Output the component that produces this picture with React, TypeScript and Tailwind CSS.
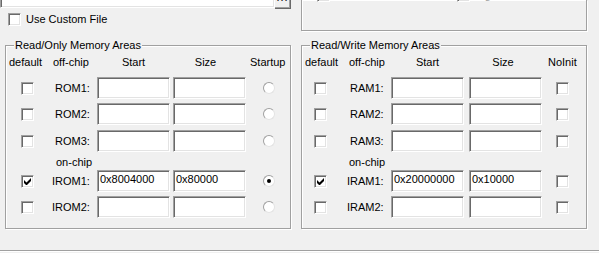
import React from 'react';

const sunken =
  'border border-t-[#a0a0a0] border-l-[#a0a0a0] border-r-white border-b-white shadow-[inset_1px_1px_0_#696969,inset_-1px_-1px_0_#e3e3e3] bg-white';

const CheckBox = ({ checked = false, className = '' }: { checked?: boolean; className?: string }) => (
  <div className={`w-[13px] h-[13px] shrink-0 flex items-center justify-center ${sunken} ${className}`}>
    {checked && (
      <svg width="7" height="7" viewBox="0 0 7 7">
        <path d="M0 2v3l2 2h1l4-4V0L2.5 4.5z" fill="#000" />
      </svg>
    )}
  </div>
);

const Radio = ({ checked = false, className = '' }: { checked?: boolean; className?: string }) => (
  <div
    className={`w-[12px] h-[12px] shrink-0 rounded-full bg-white border border-t-[#a0a0a0] border-l-[#a0a0a0] border-r-[#e3e3e3] border-b-[#e3e3e3] flex items-center justify-center ${className}`}
  >
    {checked && <div className="w-[4px] h-[4px] rounded-full bg-black" />}
  </div>
);

const Edit = ({ value = '', className = '' }: { value?: string; className?: string }) => (
  <div className={`w-[73px] h-[22px] shrink-0 px-[2px] pt-[2px] leading-[13px] text-black ${sunken} ${className}`}>
    {value}
  </div>
);

type RowData = { on: boolean; label: string; start: string; size: string; last: boolean; indent: 'rom' | 'irom' };

const romRows: RowData[] = [
  { on: false, label: 'ROM1:', start: '', size: '', last: false, indent: 'rom' },
  { on: false, label: 'ROM2:', start: '', size: '', last: false, indent: 'rom' },
  { on: false, label: 'ROM3:', start: '', size: '', last: false, indent: 'rom' },
  { on: true, label: 'IROM1:', start: '0x8004000', size: '0x80000', last: true, indent: 'irom' },
  { on: false, label: 'IROM2:', start: '', size: '', last: false, indent: 'irom' },
];

const ramRows: RowData[] = [
  { on: false, label: 'RAM1:', start: '', size: '', last: false, indent: 'rom' },
  { on: false, label: 'RAM2:', start: '', size: '', last: false, indent: 'rom' },
  { on: false, label: 'RAM3:', start: '', size: '', last: false, indent: 'rom' },
  { on: true, label: 'IRAM1:', start: '0x20000000', size: '0x10000', last: false, indent: 'irom' },
  { on: false, label: 'IRAM2:', start: '', size: '', last: false, indent: 'irom' },
];

const rowGap = ['mt-[8px]', 'mt-[4px]', 'mt-[5px]', 'mt-[1px]', 'mt-[4px]'];

const RomRow = ({ r, i }: { r: RowData; i: number }) => (
  <div className={`flex items-center h-[22px] ${rowGap[i]}`}>
    <CheckBox checked={r.on} className="ml-[15px]" />
    <div className={`w-[63px] ${r.indent === 'rom' ? 'pl-[21px]' : 'pl-[18px]'}`}>{r.label}</div>
    <Edit value={r.start} />
    <Edit value={r.size} className="ml-[3px]" />
    <Radio checked={r.last} className="ml-[17px]" />
  </div>
);

const RamRow = ({ r, i }: { r: RowData; i: number }) => (
  <div className={`flex items-center h-[22px] ${rowGap[i]}`}>
    <CheckBox checked={r.on} className="ml-[12px]" />
    <div className={`w-[64px] ${r.indent === 'rom' ? 'pl-[23px]' : 'pl-[20px]'}`}>{r.label}</div>
    <Edit value={r.start} />
    <Edit value={r.size} className="ml-[5px]" />
    <CheckBox className="ml-[14px]" />
  </div>
);

const groupBox = 'border border-[#a0a0a0] shadow-[inset_1px_1px_0_#fff,1px_1px_0_#fff]';

export default function App() {
  return (
    <div
      className="w-[599px] h-[253px] bg-[#f0f0f0] overflow-hidden flex flex-col text-[11px] leading-[13px] text-black"
      style={{ fontFamily: '"Liberation Sans", Arial, sans-serif' }}
    >
      {/* top strip: cut-off file field and code generation box */}
      <div className="flex h-[45px] shrink-0">
        <div className="w-[301px] flex flex-col">
          <div className="flex items-start">
            <div className={`w-[275px] h-[30px] -mt-[22px] ${sunken}`} />
            <div className="w-[16px] h-[9px] border-r border-b border-r-[#696969] border-b-[#696969] shadow-[inset_-1px_-1px_0_#a0a0a0] bg-[#f0f0f0] flex justify-center">
              <span className="-mt-[9px] tracking-[1px]">...</span>
            </div>
          </div>
          <div className="flex items-center h-[13px] mt-[4px]">
            <CheckBox className="ml-[8px]" />
            <span className="ml-[5px]">Use Custom File</span>
          </div>
        </div>
        <div className={`w-[286px] h-[31px] border-t-0 ${groupBox}`}>
          <div className="flex items-center h-[13px] -mt-[11px]">
            <CheckBox className="ml-[15px]" />
            <CheckBox className="ml-[127px]" />
            <span className="ml-[5px] text-[#a0a0a0]">Big Endian</span>
          </div>
        </div>
      </div>

      {/* memory areas */}
      <div className="flex pl-[5px] gap-[10px]">
        <div className={`w-[286px] h-[184px] ${groupBox}`}>
          <div className="-mt-[7px] ml-[8px] w-fit px-[1px] bg-[#f0f0f0]">Read/Only Memory Areas</div>
          <div className="flex mt-[4px]">
            <div className="w-[47px] pl-[3px]">default</div>
            <div className="w-[44px]">off-chip</div>
            <div className="w-[73px] text-center">Start</div>
            <div className="w-[73px] ml-[3px] text-center pr-[8px]">Size</div>
            <div className="pl-[4px]">Startup</div>
          </div>
          {romRows.slice(0, 3).map((r, i) => (
            <RomRow key={r.label} r={r} i={i} />
          ))}
          <div className="mt-[4px] pl-[50px]">on-chip</div>
          {romRows.slice(3).map((r, i) => (
            <RomRow key={r.label} r={r} i={i + 3} />
          ))}
        </div>

        <div className={`w-[286px] h-[184px] ${groupBox}`}>
          <div className="-mt-[7px] ml-[8px] w-fit px-[1px] bg-[#f0f0f0]">Read/Write Memory Areas</div>
          <div className="flex mt-[4px]">
            <div className="w-[47px] pl-[3px]">default</div>
            <div className="w-[42px]">off-chip</div>
            <div className="w-[73px] text-center">Start</div>
            <div className="w-[73px] ml-[5px] text-center pr-[5px]">Size</div>
            <div className="pl-[6px]">NoInit</div>
          </div>
          {ramRows.slice(0, 3).map((r, i) => (
            <RamRow key={r.label} r={r} i={i} />
          ))}
          <div className="mt-[4px] pl-[47px]">on-chip</div>
          {ramRows.slice(3).map((r, i) => (
            <RamRow key={r.label} r={r} i={i + 3} />
          ))}
        </div>
      </div>

      {/* dialog bottom edge */}
      <div className="mt-[21px] h-px bg-[#a0a0a0] shrink-0" />
      <div className="h-px bg-white shrink-0" />
    </div>
  );
}
